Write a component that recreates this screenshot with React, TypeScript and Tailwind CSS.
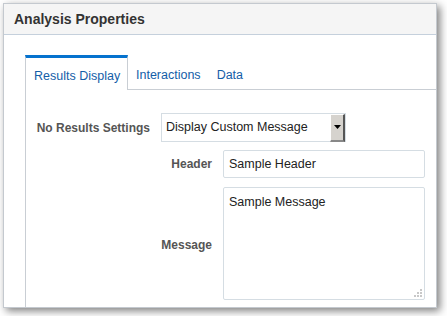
import React from "react";

export default function App() {
  return (
    <div className="w-[447px] h-[316px] bg-white pt-[3px] pl-[3px] font-['Liberation_Sans',Arial,sans-serif]">
      {/* Dialogo */}
      <div className="w-[434px] h-[305px] bg-white border border-[#c4c9cf] shadow-[3px_3px_8px_rgba(0,0,0,0.5)] flex flex-col">
        <div className="h-[31px] bg-[#f5f5f5] border-b border-[#c5d0dc] flex items-center pl-[10px] shrink-0">
          <h2 className="text-[14px] font-bold text-[#333]">Analysis Properties</h2>
        </div>

        <div className="flex-1 flex flex-col pt-[20px] pl-[21px] min-h-0">
          {/* Tabs */}
          <div className="flex h-[35px] shrink-0 text-[12.5px]">
            <div className="w-[103px] border-t-[3px] border-t-[#0572ce] border-x border-x-[#c9ced4] flex items-center pl-[8px] pt-[4px] text-[#145ea8]">
              Results Display
            </div>
            <div className="border-b border-[#c9ced4] flex items-center px-[8px] pt-[6px] text-[#145ea8]">Interactions</div>
            <div className="border-b border-[#c9ced4] flex items-center px-[8px] pt-[6px] text-[#145ea8]">Data</div>
            <div className="flex-1 border-b border-[#c9ced4]"></div>
          </div>

          {/* Panel */}
          <div className="flex-1 border-l border-[#c9ced4] pt-[23px] text-[12.5px]">
            <div className="flex items-center">
              <label className="w-[124px] text-right font-bold text-[12px] text-[#555]">No Results Settings</label>
              <div className="ml-[11px] w-[185px] h-[29px] border border-[#d5dde3] flex items-center justify-between">
                <span className="pl-[4px] text-[#222]">Display Custom Message</span>
                <div className="w-[15px] h-[28px] bg-[#d6d3ce] border-t border-l border-t-white border-l-white border-r-2 border-b-2 border-r-[#555] border-b-[#888] flex items-center justify-center">
                  <svg width="7" height="4" viewBox="0 0 7 4">
                    <path d="M0 0h7L3.5 4z" fill="#000" />
                  </svg>
                </div>
              </div>
            </div>

            <div className="flex items-center mt-[8px]">
              <label className="w-[186px] text-right font-bold text-[12px] text-[#555]">Header</label>
              <div className="ml-[11px] w-[202px] h-[28px] border border-[#d5dde3] rounded-[2px] flex items-center pl-[5px] text-[#222]">
                Sample Header
              </div>
            </div>

            <div className="flex items-center mt-[9px]">
              <label className="w-[186px] text-right font-bold text-[12px] text-[#555] pt-[3px]">Message</label>
              <div className="relative ml-[11px] w-[202px] h-[113px] border border-[#d5dde3] rounded-[2px] pl-[5px] pt-[7px] text-[#222] leading-[15px]">
                Sample Message
                <svg className="absolute right-[2px] bottom-[2px]" width="8" height="8" viewBox="0 0 8 8">
                  <rect x="6" y="0" width="2" height="2" fill="#c8c8c8" />
                  <rect x="3" y="3" width="2" height="2" fill="#c8c8c8" />
                  <rect x="6" y="3" width="2" height="2" fill="#c8c8c8" />
                  <rect x="0" y="6" width="2" height="2" fill="#c8c8c8" />
                  <rect x="3" y="6" width="2" height="2" fill="#c8c8c8" />
                  <rect x="6" y="6" width="2" height="2" fill="#c8c8c8" />
                </svg>
              </div>
            </div>
          </div>
        </div>
      </div>
    </div>
  );
}
